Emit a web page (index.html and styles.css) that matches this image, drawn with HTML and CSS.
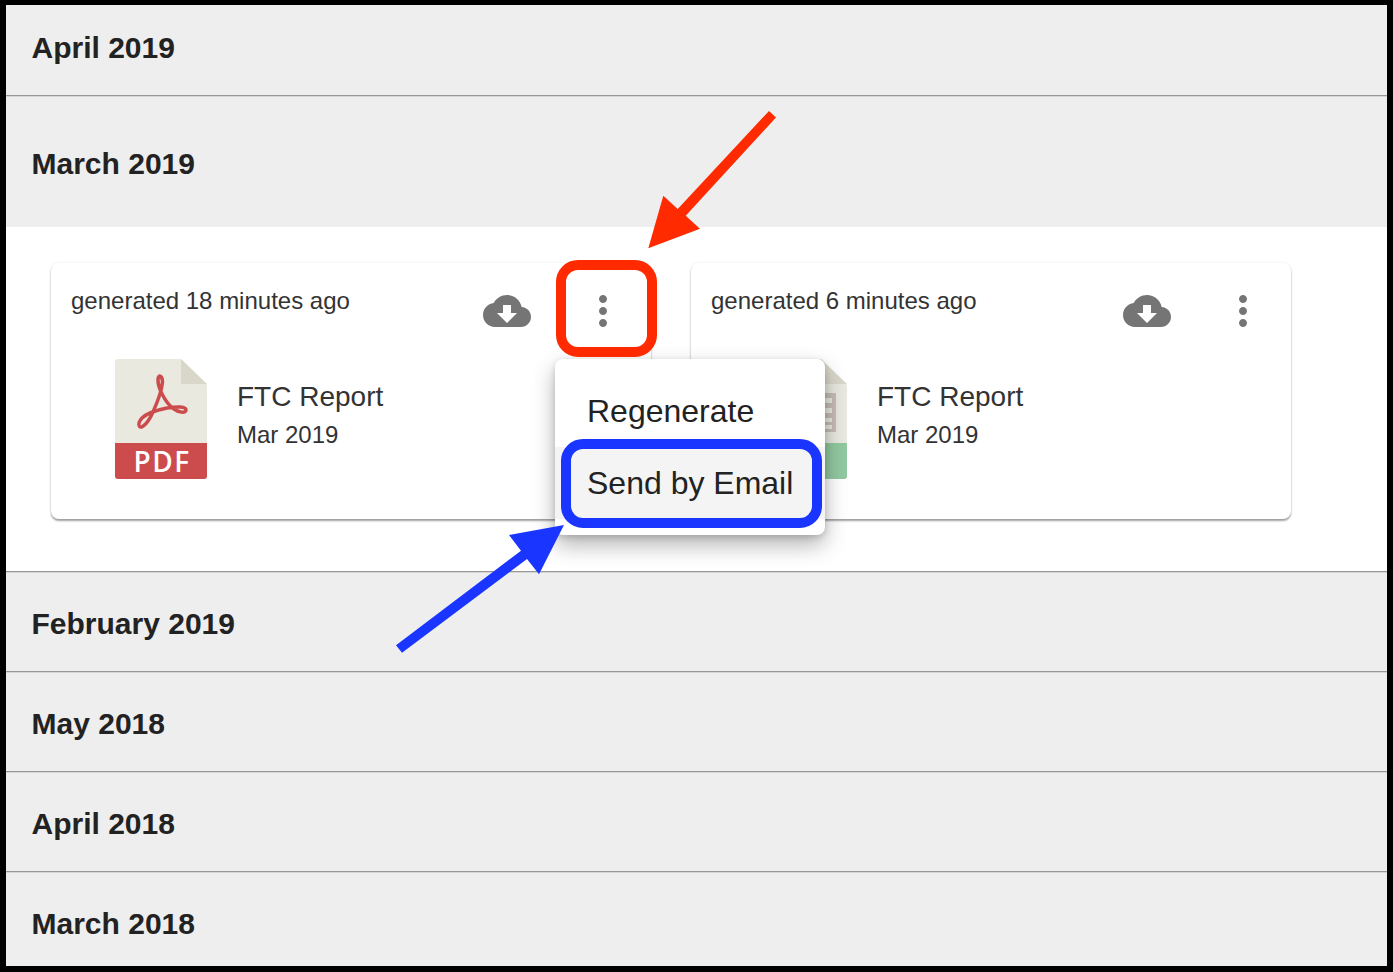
FILE: index.html
```html
<!DOCTYPE html>
<html lang="en">
<head>
    <meta charset="UTF-8">
    <meta name="viewport" content="width=device-width, initial-scale=1.0">
    <title>Reports</title>
    <link rel="stylesheet" href="styles.css">
</head>
<body>
    <div class="frame">
        <div class="month month-first">April 2019</div>
        <div class="month month-open">March 2019</div>
        <div class="month-body">
            <div class="card">
                <div class="card-head">
                    <span class="card-time">generated 18 minutes ago</span>
                    <button class="icon-btn">
                        <svg viewBox="0 0 24 24" width="48" height="48"><path d="M19.35 10.04C18.67 6.59 15.64 4 12 4 9.11 4 6.6 5.64 5.35 8.04 2.34 8.36 0 10.91 0 14c0 3.31 2.69 6 6 6h13c2.76 0 5-2.24 5-5 0-2.64-2.05-4.78-4.65-4.96zM17 13l-5 5-5-5h3V9h4v4h3z"/></svg>
                    </button>
                    <button class="icon-btn">
                        <svg viewBox="0 0 24 24" width="48" height="48"><path d="M12 8c1.1 0 2-.9 2-2s-.9-2-2-2-2 .9-2 2 .9 2 2 2zm0 2c-1.1 0-2 .9-2 2s.9 2 2 2 2-.9 2-2-.9-2-2-2zm0 6c-1.1 0-2 .9-2 2s.9 2 2 2 2-.9 2-2-.9-2-2-2z"/></svg>
                    </button>
                </div>
                <div class="card-body">
                    <svg class="doc" viewBox="0 0 92 120" width="92" height="120">
                        <path class="doc-sheet" d="M3 0H66L92 26V117a3 3 0 0 1-3 3H3a3 3 0 0 1-3-3V3a3 3 0 0 1 3-3z"/>
                        <path class="doc-fold" d="M66 0L92 25H66z"/>
                        <path class="doc-mark" d="M24.5 67.5C27 70 33 64 38 53C42 44 47 30 47.5 23C47.5 17 43.5 15 43 20C42.5 28 50 44 59 50C63 53 71 55 71 51C71 47 62 47.5 52 49C42 51 32 54 27 59C24 62 23 66 24.5 67.5Z"/>
                        <path class="doc-band-red" d="M0 84H92V117a3 3 0 0 1-3 3H3a3 3 0 0 1-3-3z"/>
                        <text class="doc-label" x="47" y="113">PDF</text>
                    </svg>
                    <div class="doc-text">
                        <div class="doc-name">FTC Report</div>
                        <div class="doc-date">Mar 2019</div>
                    </div>
                </div>
                <div class="menu">
                    <div class="menu-item">Regenerate</div>
                    <div class="menu-item menu-item-hover">Send by Email</div>
                </div>
            </div>
            <div class="card">
                <div class="card-head">
                    <span class="card-time">generated 6 minutes ago</span>
                    <button class="icon-btn">
                        <svg viewBox="0 0 24 24" width="48" height="48"><path d="M19.35 10.04C18.67 6.59 15.64 4 12 4 9.11 4 6.6 5.64 5.35 8.04 2.34 8.36 0 10.91 0 14c0 3.31 2.69 6 6 6h13c2.76 0 5-2.24 5-5 0-2.64-2.05-4.78-4.65-4.96zM17 13l-5 5-5-5h3V9h4v4h3z"/></svg>
                    </button>
                    <button class="icon-btn">
                        <svg viewBox="0 0 24 24" width="48" height="48"><path d="M12 8c1.1 0 2-.9 2-2s-.9-2-2-2-2 .9-2 2 .9 2 2 2zm0 2c-1.1 0-2 .9-2 2s.9 2 2 2 2-.9 2-2-.9-2-2-2zm0 6c-1.1 0-2 .9-2 2s.9 2 2 2 2-.9 2-2-.9-2-2-2z"/></svg>
                    </button>
                </div>
                <div class="card-body">
                    <svg class="doc" viewBox="0 0 92 120" width="92" height="120">
                        <path class="doc-sheet" d="M3 0H66L92 26V117a3 3 0 0 1-3 3H3a3 3 0 0 1-3-3V3a3 3 0 0 1 3-3z"/>
                        <path class="doc-fold" d="M66 0L92 25H66z"/>
                        <path class="doc-table" d="M11 34H81V73H11zM69 39V44H77V39zM69 49V54H77V49zM69 59V63H77V59zM69 66V70H77V66z"/>
                        <path class="doc-band-green" d="M0 84H92V117a3 3 0 0 1-3 3H3a3 3 0 0 1-3-3z"/>
                    </svg>
                    <div class="doc-text">
                        <div class="doc-name">FTC Report</div>
                        <div class="doc-date">Mar 2019</div>
                    </div>
                </div>
            </div>
        </div>
        <div class="month">February 2019</div>
        <div class="month">May 2018</div>
        <div class="month">April 2018</div>
        <div class="month month-last">March 2018</div>
    </div>

    <!-- annotations drawn on top of the screenshot -->
    <svg class="notes" viewBox="0 0 1393 972" width="1393" height="972">
        <rect class="note-red-box" x="561" y="265" width="91" height="87" rx="17"/>
        <rect class="note-blue-box" x="566" y="444" width="251" height="79" rx="17"/>
        <polygon class="note-red" points="769,111 776,117.5 685.7,215.7 700,228.7 648.3,248.3 663.3,195.7 677.7,209"/>
        <polygon class="note-blue" points="396,645.3 402,652.7 527,559 539,574.3 564,525 509,535 521,550.7"/>
    </svg>
</body>
</html>
```

FILE: styles.css
```css
* {
    box-sizing: border-box;
}
body {
    margin: 0;
    position: relative;
    width: 1393px;
    height: 972px;
    overflow: hidden;
    font-family: 'Liberation Sans', Arial, sans-serif;
    background: #fff;
}
.frame {
    display: flex;
    flex-direction: column;
    height: 972px;
    border: 6px solid #000;
    border-top-width: 5px;
    background: #fff;
}
.month {
    display: flex;
    align-items: center;
    flex: none;
    height: 100px;
    padding: 3px 0 0 25.5px;
    font-size: 30px;
    font-weight: bold;
    color: #222;
    background: #eee;
    border-top: 1px solid #d6d6d9;
    border-bottom: 1px solid #969696;
}
.month-first {
    height: 91px;
    padding-top: 0;
    padding-bottom: 4px;
    border-top: none;
}
.month-open {
    height: 131px;
    border-bottom: none;
}
.month-last {
    height: 94px;
    padding-top: 9px;
    border-bottom: none;
}
.month-body {
    display: flex;
    flex: none;
    gap: 40px;
    height: 345px;
    padding: 36px 0 0 45px;
    background: #fff;
    border-bottom: 1px solid #969696;
}
.card {
    position: relative;
    width: 600px;
    height: 256px;
    background: #fff;
    border-radius: 8px;
    box-shadow: 0 2px 2px rgba(0, 0, 0, 0.36), 0 0 3px rgba(0, 0, 0, 0.08);
}
.card-head {
    display: flex;
    height: 96px;
}
.card-time {
    flex: 1;
    padding: 24px 0 0 20px;
    font-size: 24px;
    line-height: 28px;
    color: #333;
}
.icon-btn {
    width: 96px;
    height: 96px;
    padding: 24px;
    border: none;
    background: none;
}
.icon-btn svg {
    display: block;
    fill: #757575;
}
.card-body {
    display: flex;
    gap: 30px;
    padding-left: 64px;
}
.doc {
    display: block;
    flex: none;
}
.doc-sheet {
    fill: #e9e9e0;
}
.doc-fold {
    fill: #d9d7ca;
}
.doc-mark {
    fill: none;
    stroke: #cc4b4c;
    stroke-width: 3.5;
}
.doc-band-red {
    fill: #cc4b4c;
}
.doc-band-green {
    fill: #91c9a0;
}
.doc-table {
    fill: #c8bdb8;
    fill-rule: evenodd;
}
.doc-label {
    font-family: 'Open Sans', sans-serif;
    font-size: 28px;
    font-weight: 600;
    letter-spacing: 1.5px;
    fill: #fff;
    text-anchor: middle;
}
.doc-text {
    padding-top: 21px;
}
.doc-name {
    font-size: 28px;
    line-height: 34px;
    color: #333;
}
.doc-date {
    margin-top: 7px;
    font-size: 24px;
    line-height: 28px;
    color: #333;
}
.menu {
    position: absolute;
    top: 96px;
    left: 504px;
    z-index: 2;
    width: 270px;
    height: 176px;
    padding: 16px 0;
    background: #fff;
    border-radius: 8px;
    box-shadow: 0 10px 22px rgba(0, 0, 0, 0.3), 0 2px 6px rgba(0, 0, 0, 0.15);
}
.menu-item {
    height: 72px;
    padding-left: 32px;
    font-size: 32px;
    line-height: 72px;
    color: #222;
}
.menu-item-hover {
    background: #f4f4f4;
}
.notes {
    position: absolute;
    top: 0;
    left: 0;
    z-index: 3;
}
.note-red-box {
    fill: none;
    stroke: #ff2a00;
    stroke-width: 10;
}
.note-blue-box {
    fill: none;
    stroke: #1935ff;
    stroke-width: 10;
}
.note-red {
    fill: #ff2a00;
}
.note-blue {
    fill: #1935ff;
}
```
